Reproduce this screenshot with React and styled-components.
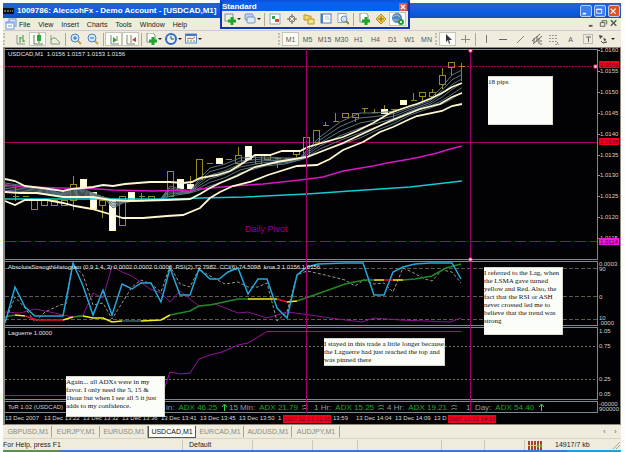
import React from "react";
import styled, { createGlobalStyle } from "styled-components";

const COLOR = {
  FACE: "#efecdd",
  SHADOW: "#aca899",
  FRAME: "#7d8994",
  CREAM: "#fdf6cf",
  CANDLE: "#958c1c",
  CURSOR: "#a0006c",
  PURPLE: "#980098",
  CYAN: "#22a8dc",
  GREEN: "#1f8a24",
  YELLOW: "#f4ee1c",
  RED: "#e8101c",
};

const GlobalStyle = createGlobalStyle`
  * {
    box-sizing: border-box;
  }

  body {
    margin: 0;
    background: #fdfefa;
    font-family: "Liberation Sans", sans-serif;
    font-size: 7px;
    color: #222;
  }

  button {
    font-family: inherit;
    font-size: inherit;
    color: inherit;
    background: none;
    border: 0;
    padding: 0;
  }
`;

const Desktop = styled.div`
  padding: 3px 4px 0 3px;
`;

const Terminal = styled.div`
  display: flex;
  flex-direction: column;
  background: ${COLOR.FACE};
`;

const TitleBar = styled.header`
  height: 15px;
  display: flex;
  align-items: center;
  gap: 2px;
  padding-right: 1px;
  background: linear-gradient(#2c62c4, #0a5be8 60%, #1450b8);
  color: white;

  h1 {
    flex: 1;
    margin: 0;
    font-size: 8px;
    line-height: 12px;
    font-weight: bold;
    white-space: nowrap;
  }
`;

const CaptionButton = styled.button`
  width: 12px;
  height: 12px;
  display: flex;
  border: 1px solid #b9d0f6;
  border-radius: 2px;
  background: ${({ $close }) => ($close ? "#e2501f" : "#3f7ff0")};
`;

const MenuBar = styled.nav`
  height: 13px;
  display: flex;
  align-items: center;
  padding: 0 1px 0 2px;
  border-bottom: 1px solid #cfc8d4;
  white-space: nowrap;
`;

const MenuItem = styled.button`
  margin-left: ${({ $first }) => ($first ? 2 : 8)}px;
  line-height: 11px;
`;

const Spacer = styled.div`
  flex: 1;
`;

const ChildButton = styled.button`
  width: 11px;
  height: 11px;
  display: flex;
  align-items: center;
  justify-content: center;
  color: #555;
`;

const ToolBar = styled.div`
  height: 16px;
  display: flex;
  align-items: center;
  padding-right: 5px;
`;

const Grip = styled.span`
  width: ${({ $wide }) => ($wide ? 9 : 4)}px;
  height: 12px;
  border-left: 2px dotted #c4c0b0;
`;

const Divider = styled.span`
  width: 4px;
  height: 13px;
  background: linear-gradient(${COLOR.SHADOW}, ${COLOR.SHADOW}) center / 1px 100% no-repeat;
`;

const ToolButton = styled.button`
  width: ${({ $drop }) => ($drop ? 20 : 17)}px;
  height: 14px;
  display: flex;
  align-items: center;
  justify-content: center;
  flex: none;
  color: #555;
  background: ${({ $pressed }) => ($pressed ? "#fdfdf8" : "none")};
  border: 1px solid ${({ $pressed }) => ($pressed ? "#c9c5b6" : "transparent")};
`;

const Palette = styled.section`
  position: absolute;
  top: 0;
  left: 220px;
  width: 190px;
  border: 2px solid #0c36b4;
  border-top-color: #0a55dc;
  background: ${COLOR.FACE};
`;

const PaletteTitle = styled.div`
  height: 9px;
  display: flex;
  align-items: center;
  justify-content: space-between;
  padding-right: 1px;
  background: #0a60ee;
  color: white;
  font-size: 8px;
  line-height: 9px;
  font-weight: bold;
`;

const PaletteClose = styled.button`
  width: 8px;
  height: 8px;
  display: flex;
  background: #dd5a48;
  border-radius: 1px;
`;

const PaletteBody = styled.div`
  height: 16px;
  display: flex;
  align-items: center;
`;

const ChartArea = styled.main`
  position: relative;
  display: flex;
  flex-direction: column;
  gap: 1px;
  padding-top: 1px;
  border: 1px solid #8c8c80;
  border-width: 1px 1px 1px 2px;
  background: #020103;
`;

const Panel = styled.section`
  height: ${({ $height }) => $height}px;
  display: flex;
`;

const Plot = styled.div`
  flex: 1;
  min-width: 0;
  border: 1px solid ${COLOR.FRAME};
  border-left: 0;

  svg {
    display: block;
    width: 100%;
    height: 100%;
  }
`;

const Scale = styled.svg`
  width: 22px;
  height: 100%;
  flex: none;
  overflow: visible;
  font-size: 6px;
  fill: #d0d0d0;
`;

const Legend = styled.text`
  font-size: 6px;
  fill: #e4e4e4;
  white-space: pre;
`;

const PivotLabel = styled.text`
  font-size: 9px;
  fill: ${COLOR.PURPLE};
`;

const TrendRow = styled.div`
  height: 12px;
  flex: 1;
  display: flex;
  align-items: center;
  padding-left: 3px;
  border: 1px solid ${COLOR.FRAME};
  border-left: 0;
  color: #8e9ca8;
  font-size: 8px;
  white-space: nowrap;
`;

const TrendName = styled.span`
  width: 158px;
  flex: none;
  font-size: 6px;
  color: #d0d0d0;
`;

const Trend = styled.span`
  width: ${({ $width }) => $width}px;
  flex: none;
  display: flex;
  align-items: center;
  gap: 4px;
  white-space: pre;

  b {
    font-weight: normal;
    color: #1fa82c;
  }
`;

const TimeAxis = styled.div`
  position: relative;
  height: 11px;
  margin: -1px 22px 0 0;
  display: flex;
  font-size: 6px;
  line-height: 11px;
  color: #d8d8d8;
  overflow: hidden;
`;

const TimeLabel = styled.span`
  flex: 0 0 39px;
  padding-right: ${({ $end }) => ($end ? 8 : 0)}px;
  text-align: ${({ $end }) => ($end ? "right" : "left")};
  white-space: nowrap;
`;

const TimeBadge = styled.span`
  position: absolute;
  top: 2px;
  left: ${({ $left }) => $left};
  width: 48px;
  height: 8px;
  line-height: 8px;
  text-align: center;
  white-space: nowrap;
  background: #f5001c;
  color: #6a0030;
`;

const CursorLayer = styled.svg`
  position: absolute;
  top: 1px;
  left: 0;
  width: calc(100% - 22px);
  height: 364px;
`;

const Note = styled.p`
  position: absolute;
  top: ${({ $top }) => $top}px;
  left: ${({ $left }) => $left}px;
  width: ${({ $width }) => $width}px;
  height: ${({ $height }) => $height}px;
  margin: 0;
  padding-top: 1px;
  background: #fbfdf9;
  border: 1px solid #d8d8cc;
  border-left: 0;
  color: #111;
  font-family: "Liberation Serif", serif;
  font-size: 7px;
  line-height: 8px;
  white-space: pre;
`;

const Tabs = styled.nav`
  height: 13px;
  display: flex;
  align-items: center;
  padding-left: 1px;
`;

const Tab = styled.button`
  width: 48px;
  height: 12px;
  color: ${({ $active }) => ($active ? "#111" : "#8d897b")};
  background: ${({ $active }) => ($active ? "#fdfdf8" : "none")};
  border: 1px solid ${({ $active }) => ($active ? "#555" : "transparent")};
  border-top: 0;
  border-right-color: ${({ $active }) => ($active ? "#555" : "#a8a494")};
`;

const StatusBar = styled.footer`
  height: 12px;
  display: flex;
  align-items: center;
  border-top: 1px solid #d8d4c4;
  line-height: 10px;
`;

const StatusCell = styled.span`
  width: ${({ $width }) => ($width ? `${$width}px` : "auto")};
  flex: ${({ $width }) => ($width ? "none" : 1)};
  height: 10px;
  display: flex;
  align-items: center;
  gap: 13px;
  padding-left: ${({ $pad }) => $pad || 0}px;
  border-right: 1px solid ${({ $plain }) => ($plain ? "transparent" : "#cbc7b6")};
  white-space: nowrap;
`;

const SizeGrip = styled.svg`
  width: 8px;
  height: 8px;
  flex: none;
  margin-left: auto;
`;

const TaskBar = styled.div`
  height: 3px;
  background: linear-gradient(90deg, #4a9a48 56px, #3b78dc 56px calc(100% - 54px), #18a4dc calc(100% - 54px));
`;

const ICONS = {
  app: (
    <>
      <rect y="3" width="11" height="6" fill="#111" />
      <path d="M1 6h2M4 6h2M7 6h1M9 6h1" stroke="#bbb" />
    </>
  ),
  mdi: (
    <>
      <rect x="4" y="1" width="7" height="7" fill="#dbe8fb" stroke="#6d97d8" />
      <rect x="1" y="4" width="8" height="7" fill="#fff" stroke="#6d97d8" />
      <path d="M1 5h8M3 8h4" stroke="#6d97d8" />
    </>
  ),
  bars: (
    <>
      <path d="M2 2v9h8" stroke="#8a988a" fill="none" />
      <path d="M5 4v6M5 5h2M8 2v7M8 8h2" stroke="#32963a" fill="none" />
    </>
  ),
  candles: (
    <>
      <path d="M2 2v9h9M7 0v10" stroke="#5c7c60" fill="none" />
      <rect x="5" y="2" width="4" height="6" fill="#25a834" />
    </>
  ),
  line: (
    <>
      <path d="M2 2v9h9" stroke="#8a988a" fill="none" />
      <path d="M2 7C5 3 7 5 11 10" stroke="#4ca654" fill="none" />
    </>
  ),
  zoomIn: (
    <>
      <path d="M8 8l3 3" stroke="#c8a23c" strokeWidth="2" />
      <circle cx="5" cy="5" r="4" fill="#d2e8fb" stroke="#4a82c4" />
      <path d="M3 5h4M5 3v4" stroke="#2870c0" />
    </>
  ),
  zoomOut: (
    <>
      <path d="M8 8l3 3" stroke="#c8a23c" strokeWidth="2" />
      <circle cx="5" cy="5" r="4" fill="#d2e8fb" stroke="#4a82c4" />
      <path d="M3 5h4" stroke="#2870c0" />
    </>
  ),
  scroll: (
    <>
      <path d="M3 2v9h8M9 3v5" stroke="#7c8c7c" fill="none" />
      <path d="M5 4l4 3-4 3z" fill="#2fa53a" />
    </>
  ),
  shift: (
    <>
      <path d="M2 2v9h8M6 2v8" stroke="#7c8c7c" fill="none" />
      <path d="M11 4L7 7l4 2z" fill="#d0402c" />
    </>
  ),
  newDoc: (
    <>
      <path d="M2 0h6l2 2v7H2z" fill="#fff" stroke="#88908a" />
      <path d="M8 4v8M4 8h8" stroke="#1fa42c" strokeWidth="3" />
    </>
  ),
  newChart: (
    <>
      <rect x="1" y="1" width="8" height="7" fill="#e6f2e6" stroke="#7d9a84" />
      <path d="M8 4v8M4 8h8" stroke="#1fa42c" strokeWidth="3" />
    </>
  ),
  clock: (
    <>
      <circle cx="6" cy="6" r="5" fill="#e8f2fc" stroke="#2f6cc8" strokeWidth="2" />
      <path d="M6 3v3h3" stroke="#345" fill="none" />
    </>
  ),
  template: (
    <>
      <rect x="0.500" y="1" width="11" height="9" fill="#f4f8fc" stroke="#5c8cc8" />
      <path d="M1 2h10" stroke="#3e78c4" strokeWidth="2" />
      <path d="M2 6l3-1 2 1 3-2" stroke="#c85040" fill="none" />
      <path d="M2 8h8" stroke="#50a050" strokeDasharray="2 1" />
    </>
  ),
  profiles: (
    <>
      <rect x="1" y="1" width="8" height="6" rx="1" fill="#bcd4f0" stroke="#7095c4" />
      <rect x="3" y="4" width="8" height="6" rx="1" fill="#dceafa" stroke="#7095c4" />
    </>
  ),
  market: (
    <>
      <rect x="1" y="1" width="10" height="10" fill="#fff" stroke="#8aa8c8" />
      <path d="M3 3h3v3H3z" fill="#38a048" />
      <path d="M6 6h4v3H6z" fill="#d04838" />
    </>
  ),
  target: (
    <>
      <circle cx="6" cy="6" r="3" fill="none" stroke="#777" />
      <path d="M6 1v4M6 7v4M1 6h4M7 6h4" stroke="#666" />
    </>
  ),
  folder: (
    <>
      <path d="M1 2h3l1 1h3v4H1z" fill="#f2d668" stroke="#b8942c" />
      <path d="M5 6h6v5H5z" fill="#f8e488" stroke="#b8942c" />
    </>
  ),
  terminal: (
    <>
      <rect x="1" y="1" width="10" height="9" fill="#fff" stroke="#4a7cc0" />
      <path d="M2 1v9" stroke="#4a7cc0" strokeWidth="2" />
      <path d="M5 4h4M5 6h5" stroke="#b4c4d4" />
    </>
  ),
  tester: (
    <>
      <rect x="1" y="0.500" width="8" height="9" fill="#fff" stroke="#98a4b4" />
      <circle cx="7" cy="6" r="3" fill="#cfe2f6" stroke="#6e90bc" />
      <path d="M9 8l3 3" stroke="#9c8040" strokeWidth="2" />
    </>
  ),
  editor: (
    <>
      <path d="M6 1l5 5-5 5-5-5z" fill="#f4d34c" stroke="#b48c20" />
      <path d="M6 3v6M3 6h6" stroke="#8c6a18" />
    </>
  ),
  globe: (
    <>
      <circle cx="5" cy="5" r="5" fill="#4a88d4" />
      <path d="M1 4q3-4 7 0M1 7h7" stroke="#e2c45c" fill="none" />
      <circle cx="9" cy="9" r="2" fill="#fff" stroke="#24983c" strokeWidth="2" />
    </>
  ),
  pointer: <path d="M4 1v8l2-2 1 4 1-1-1-3h3z" fill="#333" />,
  cross: <path d="M6.500 2v8M2 6.500h9" stroke="#888" />,
  vline: <path d="M6.500 2v8" stroke="#777" />,
  hline: <path d="M2 6.500h8" stroke="#666" />,
  trend: <path d="M3 10l7-7" stroke="#888" />,
  channel: (
    <>
      <path d="M1 8l8-7M2 11l9-8M3 5v5M6 3v6M8 5v6M9 11h2M9 8h2" stroke="#666" fill="none" />
    </>
  ),
  fibo: <path d="M1 2.500h9M1 5.500h9M1 8.500h9M7 11.500h4M9.500 9v3" stroke="#999" strokeDasharray="2 1" />,
  label: (
    <>
      <rect x="1.500" y="1.500" width="9" height="9" fill="none" stroke="#888" strokeDasharray="1 1" />
      <path d="M4 4h5M6.500 4v5" stroke="#666" />
    </>
  ),
  arrows: (
    <>
      <path d="M1 2l4 1-3 3zM5 5l3 1-1 3z" fill="#444" />
      <path d="M3 8l2 2 4-1" stroke="#444" fill="none" />
    </>
  ),
  min: <path d="M2 8h4" stroke="currentColor" strokeWidth="2" />,
  max: <path d="M2 2.500h6v5H2zM2 3h6" stroke="currentColor" fill="none" />,
  restore: <path d="M4.500 2.500h5v4M2.500 4.500h5v4h-5zM4.500 2v2" stroke="currentColor" fill="none" />,
  close: <path d="M2 2l6 6M8 2l-6 6" stroke="currentColor" strokeWidth="1.500" />,
  traffic: (
    <>
      <path d="M0 4h14M0 9h14" stroke="#a8402c" strokeWidth="4" strokeDasharray="2 1" />
      <path d="M0 6.500h14" stroke="#e0c86c" />
      <path d="M9 7h5" stroke="#6c9c38" strokeWidth="3" strokeDasharray="2 1" />
    </>
  ),
};

function Icon({ name, width = 12 }) {
  return (
    <svg width={width} height="12" viewBox={`0 0 ${width} 12`} aria-hidden="true">
      {ICONS[name]}
    </svg>
  );
}

function Caret() {
  return (
    <svg width="5" height="4" viewBox="0 0 5 4" aria-hidden="true">
      <path d="M1 1h4L3 3z" fill="#222" />
    </svg>
  );
}

function Tool({ icon, label, text, pressed, drop }) {
  return (
    <ToolButton type="button" aria-label={label} $pressed={pressed} $drop={drop}>
      {icon && <Icon name={icon} />}
      {text}
      {drop && <Caret />}
    </ToolButton>
  );
}

// body top, body bottom, high, low, filled
const CANDLES = [
  [196, 196, 183, 200], [196, 196, 196, 196], [200, 209, 200, 209], [200, 205, 200, 205],
  [200, 205, 200, 205], [200, 205, 200, 205], [184, 200, 175, 209], [179, 187, 179, 187, 1],
  [192, 208, 192, 208, 1], [200, 205, 200, 217], [200, 230, 200, 230, 1], [196, 225, 196, 225],
  [192, 200, 192, 200, 1], [196, 196, 192, 200], [196, 199, 196, 199], [200, 200, 200, 200],
  [171, 196, 171, 196], [179, 188, 179, 188, 1], [184, 188, 175, 191, 1], [159, 179, 159, 179],
  [163, 163, 163, 163], [158, 163, 158, 163, 1], [159, 159, 159, 159], [155, 163, 146, 167],
  [146, 159, 146, 159, 1], [155, 163, 155, 163], [155, 159, 155, 159], [158, 158, 156, 167],
  [158, 158, 158, 158], [151, 154, 151, 156], [137, 156, 137, 156], [130, 142, 130, 142],
  [125, 125, 121, 125], [121, 121, 112, 121], [113, 117, 113, 117], [113, 117, 113, 121],
  [108, 108, 108, 112], [112, 112, 108, 112], [109, 113, 104, 113, 1], [109, 109, 109, 117],
  [100, 104, 100, 104, 1], [100, 100, 92, 100], [92, 96, 92, 100], [92, 96, 88, 96],
  [75, 84, 67, 88], [62, 67, 62, 75], [66, 66, 62, 80],
];

const BANDS = [
  "5,179 15,181 25,186 42,188 63,191 72,189 83,188 93,187 103,185 113,186 125,184 150,182 170,182 183,183 192,182 200,178 217,175 230,171 240,165 255,155 270,155 282,151 300,151 308,147 325,142 343,137 357,131 373,123 390,113 410,106 417,104 432,98 442,93 452,87 462,83",
  "5,192 20,193 37,193 63,197 80,197 93,197 110,200 130,201 167,200 190,199 200,194 210,188 220,183 237,176 255,167 277,162 307,157 320,152 343,143 360,135 373,129 390,121 410,113 420,109 440,104 452,97 462,93",
  "5,201 15,205 25,200 47,200 63,203 75,206 92,209 113,215 123,218 143,218 167,216 183,215 200,208 210,198 220,192 233,186 250,182 268,175 297,166 317,165 330,159 343,150 363,142 380,132 393,127 410,119 417,116 442,111 452,106 462,104",
];

// x, fastest average, slowest average
const RIBBON = [
  [5, 183, 192], [25, 186, 193], [45, 189, 194], [60, 193, 196], [72, 191, 196], [83, 189, 195],
  [93, 193, 197], [103, 197, 197], [113, 208, 199], [123, 203, 201], [133, 201, 201], [160, 200, 200],
  [170, 186, 196], [190, 192, 193], [200, 178, 190], [210, 168, 186], [225, 164, 181], [240, 158, 173],
  [265, 157, 166], [285, 158, 164], [300, 158, 160], [307, 150, 158], [320, 137, 152], [340, 122, 145],
  [360, 113, 138], [375, 113, 131], [395, 111, 123], [410, 106, 115], [430, 99, 108], [442, 87, 104],
  [452, 75, 99], [462, 70, 92],
];

const KAMA = [
  [COLOR.GREEN, "5,317 15,315"],
  [COLOR.YELLOW, "15,315 25,316"],
  [COLOR.RED, "25,316 37,320 63,320"],
  [COLOR.YELLOW, "63,320 73,317"],
  [COLOR.GREEN, "73,317 83,316"],
  [COLOR.YELLOW, "83,316 93,318 103,318 112,322 122,321"],
  ["#3c6a60", "122,321 141,321"],
  [COLOR.YELLOW, "141,321 161,320 170,315"],
  [COLOR.GREEN, "170,315 190,311 199,306 210,305 238,299 248,299"],
  [COLOR.YELLOW, "248,299 277,299"],
  [COLOR.RED, "277,299 287,302"],
  [COLOR.YELLOW, "287,302 297,301"],
  [COLOR.GREEN, "297,301 320,293 345,284 364,280 374,280"],
  [COLOR.YELLOW, "374,280 384,280"],
  [COLOR.RED, "384,280 393,280"],
  [COLOR.YELLOW, "393,280 403,280"],
  [COLOR.GREEN, "403,280 415,279 432,276 446,268 461,264"],
];

const PRICES = ["1.0160", "1.0155", "1.0150", "1.0145", "1.0140", "1.0135", "1.0130", "1.0125", "1.0120", "1.0115"];

// the labels next to a cursor badge are cut short
const TIMES = [
  "13 Dec 2007", "13 Dec 13:22", "13 Dec 13:32", "13 Dec 13:36", "13 Dec 13:41", "13 Dec 13:45",
  "13 Dec 13:50", "1", "13:59", "13 Dec 14:04", "13 Dec 14:09", "13 D",
];

const TRENDS = [
  { period: "in:", value: "ADX 46.25", up: true, width: 63 },
  { period: "15 Min:", value: "ADX 21.79", width: 85 },
  { period: "1 Hr:", value: "ADX 15.25", width: 73 },
  { period: "4 Hr:", value: "ADX 19.21", width: 79 },
  { period: "1  Day:", value: "ADX 54.40", up: true, width: 85 },
];

const SYMBOLS = ["GBPUSD,M1", "EURJPY,M1", "EURUSD,M1", "USDCAD,M1", "EURCAD,M1", "AUDUSD,M1", "AUDJPY,M1"];

function Candle({ x, candle }) {
  const [top, bottom, high, low, filled] = candle;
  return (
    <g stroke={COLOR.CANDLE} shapeRendering="crispEdges">
      {high < low && <path d={`M${x} ${high}V${top}M${x} ${bottom}V${low}`} />}
      {top === bottom ? (
        <path d={`M${x - 3} ${top}h6`} />
      ) : (
        <rect
          x={x - 3}
          y={top}
          width="6"
          height={bottom - top}
          fill={filled ? "#fffff0" : "none"}
          stroke={filled ? "#fffbc0" : COLOR.CANDLE}
        />
      )}
    </g>
  );
}

function PricePlot() {
  return (
    <svg viewBox="5 50 592 209" preserveAspectRatio="none" fill="none">
      <path d="M5 66.500H597" stroke={COLOR.CURSOR} strokeDasharray="2 1" />
      <path d="M5 142.500H597" stroke={COLOR.CURSOR} />
      <path d="M5 241.500H597" stroke={COLOR.PURPLE} strokeDasharray="11 4" />
      {CANDLES.map((candle, i) => (
        <Candle key={i} x={Math.round(15 + i * 9.7) + 0.5} candle={candle.map((v, k) => (k < 4 ? v + 0.5 : v))} />
      ))}
      {[0, 0.2, 0.4, 0.6, 0.8, 1].map((t) => (
        <polyline
          key={t}
          points={RIBBON.map(([x, fast, slow]) => `${x},${fast + (slow - fast) * t}`).join(" ")}
          stroke="#5c7480"
        />
      ))}
      <polyline
        points="5,185 27,187 60,188 97,189 113,190 153,191 190,190 200,189 233,186 263,184 300,180 323,177 343,171 373,166 387,163 410,159 420,157 437,153 450,149 462,146"
        stroke="#dc14c4"
        strokeWidth="1.5"
      />
      <polyline
        points="5,199 180,199 200,198 245,197 307,194 350,191 410,187 462,181"
        stroke="#10ccd4"
        strokeWidth="1.5"
      />
      {BANDS.map((points) => (
        <polyline key={points} points={points} stroke={COLOR.CREAM} strokeWidth="1.8" />
      ))}
      <Legend x="8" y="56">
        USDCAD,M1  1.0156 1.0157 1.0153 1.0156
      </Legend>
      <PivotLabel x="245" y="232">
        Daily Pivot
      </PivotLabel>
    </svg>
  );
}

function StrengthPlot() {
  return (
    <svg viewBox="5 262 592 63" preserveAspectRatio="none" fill="none">
      <path d="M5 268.500H597M5 296.500H597M5 319.500H597" stroke="#5c5a50" strokeDasharray="4 2" />
      <polyline
        points="5,312 20,313 35,309 50,312 72,317 83,315 93,293 103,298 112,266 122,272 132,276 150,289 161,293 170,302 180,291 199,306 215,304 238,313 248,312 267,318 287,312 310,315 330,318 362,322 374,318 400,320 450,322 461,318"
        stroke="#8c1490"
      />
      <polyline
        points="5,322 15,297 25,308 35,322 45,312 60,305 66,304 73,264 83,275 93,305 103,303 112,319 122,303 132,287 141,280 151,284 161,292 170,266 180,284 190,287 199,269 210,276 225,284 238,282 248,287 258,287 267,283 277,321 287,312 297,275 307,271 325,275 345,280 355,286 364,280 374,284 384,283 393,292 403,268 410,271 425,279 432,281 442,270 452,272 461,283"
        stroke="#98988c"
        strokeDasharray="3 2"
      />
      {KAMA.map(([color, points]) => (
        <polyline key={points} points={points} stroke={color} strokeWidth="1.5" />
      ))}
      <polyline
        points="5,323 15,287 25,307 35,316 63,316 73,263 83,286 93,315 103,290 112,315 122,284 132,289 141,283 151,283 161,302 170,268 180,295 190,295 199,269 210,279 219,279 228,272 238,268 248,294 258,279 267,279 277,308 287,318 297,275 307,267 318,264 345,263 363,263 374,295 384,295 393,272 403,267 415,264 430,263 452,263 461,279"
        stroke={COLOR.CYAN}
        strokeWidth="1.5"
      />
      <Legend x="8" y="269">
        AbsoluteStrengthHistogram (0,9,1,4,,3) 0.0002 0.0002 0.0000  RSI(2) 72.7982  CCI(6) 74.5098  kma 3 1.0156 1.0156
      </Legend>
    </svg>
  );
}

function LaguerrePlot() {
  return (
    <svg viewBox="5 328 592 71" preserveAspectRatio="none" fill="none">
      <path d="M5 346.500H597M5 379.500H597" stroke="#74746a" strokeDasharray="2 2" />
      <polyline
        points="5,395.5 162,395.5 170,372 180,374 190,373 199,359 210,355 222,352 238,345 248,343 267,331.5 461,331.5"
        stroke="#a010a8"
      />
      <Legend x="8" y="335">
        Laguerre 1.0000
      </Legend>
    </svg>
  );
}

function Badge({ y, fill, children }) {
  return (
    <g>
      <rect x="1" y={y - 4} width="20" height="7" fill={fill} />
      <text x="2" y={y + 2} fill="#5c0038">
        {children}
      </text>
    </g>
  );
}

function Chart() {
  return (
    <ChartArea>
      <Panel $height={211}>
        <Plot>
          <PricePlot />
        </Plot>
        <Scale>
          {PRICES.map((price, i) => (
            <g key={price}>
              <path d={`M0 ${Math.round(1 + i * 20.9)}.5h2`} stroke="#999" />
              <text x="2" y={Math.round(3 + i * 20.9)}>
                {price}
              </text>
            </g>
          ))}
          <Badge y={16} fill="#f5001c">1.0156</Badge>
          <Badge y={93} fill="#f5001c">1.0138</Badge>
          <Badge y={193} fill="#f018e0">1.0114</Badge>
        </Scale>
      </Panel>
      <Panel $height={65}>
        <Plot>
          <StrengthPlot />
        </Plot>
        <Scale>
          <text x="1" y="5">0.0003</text>
          <text x="1" y="10">90</text>
          <text x="1" y="38">0</text>
          <text x="1" y="59">10</text>
          <text x="1" y="64">.0000</text>
        </Scale>
      </Panel>
      <Panel $height={73}>
        <Plot>
          <LaguerrePlot />
        </Plot>
        <Scale>
          <text x="1" y="6">1.05</text>
          <text x="1" y="21">0.75</text>
          <text x="1" y="54">0.25</text>
          <text x="1" y="69">0.05</text>
        </Scale>
      </Panel>
      <Panel $height={12}>
        <TrendRow>
          <TrendName>ToR 1.02 (USDCAD)</TrendName>
          {TRENDS.map(({ period, value, up, width }) => (
            <Trend key={period} $width={width}>
              {period}
              <b>{value}</b>
              <svg width="7" height="8" viewBox="0 0 7 8" fill="none">
                {up ? (
                  <path d="M3.500 8V2M1 4l2.500-3L6 4" stroke="#28e03c" />
                ) : (
                  <path d="M0 3h2l1-1 1 1h2M0 6h2l1-1 1 1h2" stroke="#5a8c5c" />
                )}
              </svg>
            </Trend>
          ))}
        </TrendRow>
        <Scale>
          <text x="1" y="5">-00000</text>
          <text x="1" y="10">900000</text>
        </Scale>
      </Panel>
      <TimeAxis>
        {TIMES.map((time) => (
          <TimeLabel key={time} $end={time === "13:59"}>{time}</TimeLabel>
        ))}
        <TimeBadge $left="46.9%">2007.12.13 13:55</TimeBadge>
        <TimeBadge $left="74.7%">2007.12.13 14:12</TimeBadge>
      </TimeAxis>
      <CursorLayer viewBox="5 49 593 364" preserveAspectRatio="none" aria-hidden="true">
        <path d="M306.500 49V413M470.500 49V413" stroke={COLOR.CURSOR} />
        <path d="M469 49h3v3h-3zM469 258h3v3h-3zM594 65h3v3h-3z" fill="#fff" stroke="#f0306c" />
      </CursorLayer>
      <Note $top={28} $left={483} $width={65} $height={49}>18 pips</Note>
      <Note $top={219} $left={479} $width={79} $height={68}>
        {`I referred to the Lag, when
the LSMA gave turned
yellow and Red. Also, the
fact that the RSI or ASH
never crossed led me to
believe that the trend was
strong`}
      </Note>
      <Note $top={290} $left={319} $width={121} $height={28}>
        {`I stayed in this trade a little longer because
the Laguerre had just reached the top and
was pinned there`}
      </Note>
      <Note $top={328} $left={61} $width={99} $height={41}>
        {`Again... all ADXs were in my
favor. I only need the 5, 15 &
1hour but when I see all 5 it just
adds to my confidence.`}
      </Note>
    </ChartArea>
  );
}

function StandardPalette() {
  return (
    <Palette>
      <PaletteTitle>
        Standard
        <PaletteClose type="button" aria-label="Close toolbar">
          <svg viewBox="0 0 12 12" stroke="#fff" strokeWidth="2">
            <path d="M3 3l6 6M9 3l-6 6" />
          </svg>
        </PaletteClose>
      </PaletteTitle>
      <PaletteBody>
        <Tool icon="newChart" label="New chart" drop />
        <Tool icon="profiles" label="Profiles" drop />
        <Divider />
        <Tool icon="market" label="Market watch" />
        <Tool icon="target" label="Data window" />
        <Tool icon="folder" label="Navigator" />
        <Tool icon="terminal" label="Terminal" />
        <Tool icon="tester" label="Strategy tester" />
        <Divider />
        <Tool icon="newDoc" label="New order" />
        <Tool icon="editor" label="Editor" />
        <Tool icon="globe" label="Expert advisors" pressed />
      </PaletteBody>
    </Palette>
  );
}

export default function App() {
  return (
    <Desktop>
      <GlobalStyle />
      <Terminal>
        <TitleBar>
          <Icon name="app" />
          <h1>1009786: AleccohFx - Demo Account - [USDCAD,M1]</h1>
          <CaptionButton type="button" aria-label="Minimize"><Icon name="min" /></CaptionButton>
          <CaptionButton type="button" aria-label="Maximize"><Icon name="max" /></CaptionButton>
          <CaptionButton type="button" aria-label="Close" $close><Icon name="close" /></CaptionButton>
        </TitleBar>
        <MenuBar>
          <Icon name="mdi" />
          {["File", "View", "Insert", "Charts", "Tools", "Window", "Help"].map((item, i) => (
            <MenuItem key={item} type="button" $first={i === 0}>{item}</MenuItem>
          ))}
          <Spacer />
          <ChildButton type="button" aria-label="Minimize chart"><Icon name="min" /></ChildButton>
          <ChildButton type="button" aria-label="Restore chart"><Icon name="restore" /></ChildButton>
          <ChildButton type="button" aria-label="Close chart"><Icon name="close" /></ChildButton>
        </MenuBar>
        <ToolBar>
          <Grip $wide />
          <Tool icon="bars" label="Bar chart" />
          <Tool icon="candles" label="Candlesticks" pressed />
          <Tool icon="line" label="Line chart" />
          <Divider />
          <Tool icon="zoomIn" label="Zoom in" />
          <Tool icon="zoomOut" label="Zoom out" />
          <Divider />
          <Tool icon="scroll" label="Auto scroll" pressed />
          <Tool icon="shift" label="Chart shift" pressed />
          <Divider />
          <Tool icon="newDoc" label="Indicators" drop />
          <Tool icon="clock" label="Periods" drop />
          <Tool icon="template" label="Templates" drop />
          <Spacer />
          <Grip />
          {["M1", "M5", "M15", "M30", "H1", "H4", "D1", "W1", "MN"].map((period) => (
            <Tool key={period} text={period} pressed={period === "M1"} />
          ))}
          <Grip />
          <Tool icon="pointer" label="Cursor" pressed />
          <Tool icon="cross" label="Crosshair" />
          <Divider />
          <Tool icon="vline" label="Vertical line" />
          <Tool icon="hline" label="Horizontal line" />
          <Tool icon="trend" label="Trendline" />
          <Tool icon="channel" label="Channel" />
          <Tool icon="fibo" label="Fibonacci" />
          <Tool text="A" label="Text" />
          <Tool icon="label" label="Text label" />
          <Tool icon="arrows" label="Arrows" drop />
        </ToolBar>
        <Chart />
        <Tabs>
          {SYMBOLS.map((symbol) => (
            <Tab key={symbol} type="button" $active={symbol === "USDCAD,M1"}>{symbol}</Tab>
          ))}
          <Spacer />
          <ChildButton type="button" aria-label="Scroll left">‹</ChildButton>
          <ChildButton type="button" aria-label="Scroll right">›</ChildButton>
        </Tabs>
        <StatusBar>
          <StatusCell $width={180}>For Help, press F1</StatusCell>
          <StatusCell $width={70} $pad={6}>Default</StatusCell>
          <StatusCell $width={60} />
          <StatusCell $width={45} />
          <StatusCell />
          <StatusCell $width={43} />
          <StatusCell $width={40} />
          <StatusCell $width={96} $pad={3} $plain>
            <Icon name="traffic" width={14} />
            14917/7 kb
            <SizeGrip viewBox="0 0 8 8" stroke="#a8a494">
              <path d="M1 8l7-7M4 8l4-4" />
            </SizeGrip>
          </StatusCell>
        </StatusBar>
        <TaskBar />
      </Terminal>
      <StandardPalette />
    </Desktop>
  );
}
